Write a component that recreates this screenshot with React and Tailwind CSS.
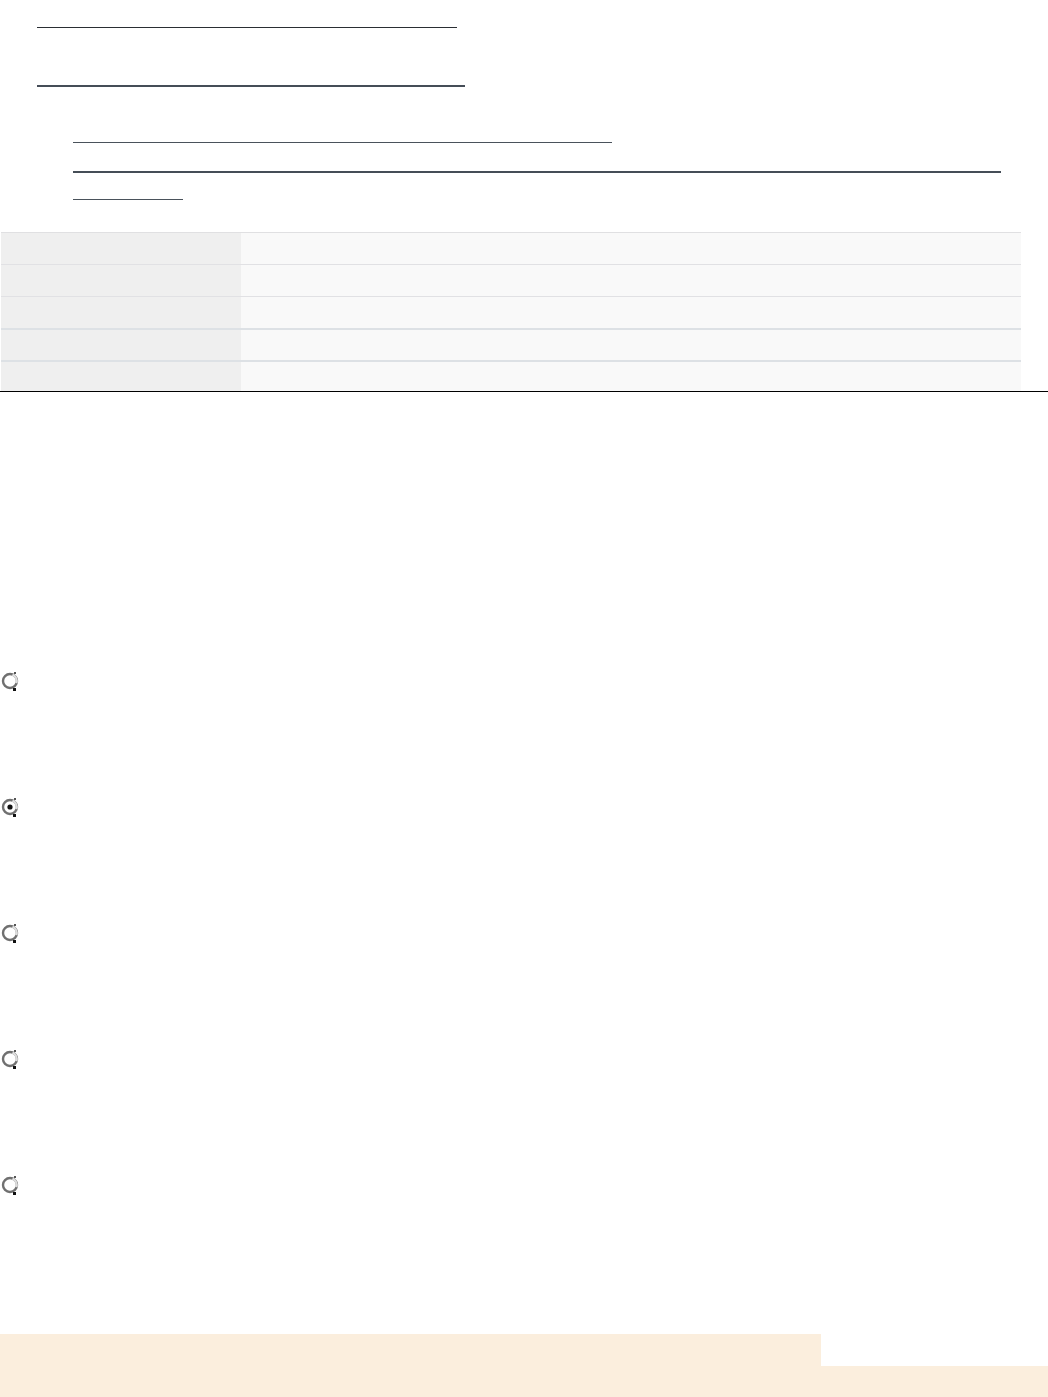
const rows = [
  { border: 'border-t border-[#e0e0e2]', h: 'h-[32px]' },
  { border: 'border-t border-[#e1e1e4]', h: 'h-[32px]' },
  { border: 'border-t border-[#e1e1e4]', h: 'h-[32px]' },
  { border: 'border-t-2 border-[#dde1e5]', h: 'h-[32px]' },
  { border: 'border-t-2 border-[#dde1e5]', h: 'h-[31px]' },
];

const Radio = ({ checked }) => (
  <svg width="20" height="22" viewBox="0 0 20 22" className="block">
    <circle cx="10" cy="11" r="7" fill="#ffffff" stroke="#707070" strokeWidth="2.4" />
    <path d="M12.5 4.6a7 7 0 0 1 3.8 8.5" stroke="#dedede" strokeWidth="2.4" fill="none" />
    <rect x="13" y="18" width="3" height="3" fill="#111111" />
    <rect x="14" y="2" width="2" height="2" fill="#555555" />
    {checked && <circle cx="10" cy="11" r="2.6" fill="#111111" />}
  </svg>
);

export default function App() {
  return (
    <div className="min-h-[1397px] w-[1048px] bg-white font-['Liberation_Sans',sans-serif] text-transparent">
      {/* links */}
      <div className="pl-[37px] pt-[27px]">
        <div className="h-px w-[420px] bg-[#2a2e33]" />
        <div className="mt-[57px] h-[2px] w-[428px] bg-[#454d57]" />
      </div>

      {/* list of links */}
      <div className="pl-[73px] pt-[55px]">
        <div className="h-px w-[539px] bg-[#4a525b]" />
        <div className="mt-[28px] h-[2px] w-[928px] bg-[#454d57]" />
        <div className="mt-[26px] h-px w-[110px] bg-[#4a525b]" />
      </div>

      {/* table */}
      <div className="mt-[32px] border-b border-black">
        <div className="ml-px w-[1020px]">
          {rows.map((r, i) => (
            <div key={i} className={`flex ${r.h} ${r.border}`}>
              <div className="w-[240px] bg-[#efefef]" />
              <div className="flex-1 bg-[#f9f9f9]" />
            </div>
          ))}
        </div>
      </div>

      {/* radio options */}
      <div className="flex flex-col gap-[104px] pt-[278px]">
        <Radio />
        <Radio checked />
        <Radio />
        <Radio />
        <Radio />
      </div>

      {/* footer bars */}
      <div className="mt-[138px]">
        <div className="h-[32px] w-[821px] bg-[#fbeedd]" />
        <div className="h-[31px] w-[1048px] bg-[#fbeedd]" />
      </div>
    </div>
  );
}
